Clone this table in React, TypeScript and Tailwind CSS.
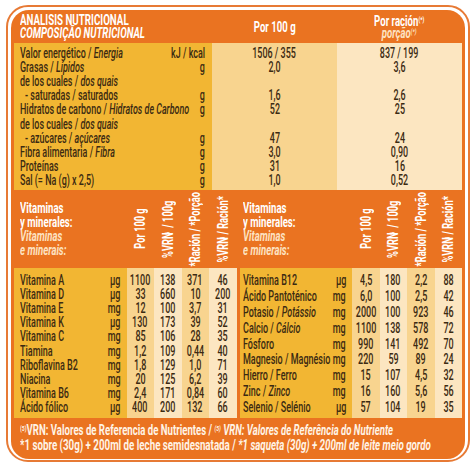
import React from "react";

// condensed look: Roboto squeezed horizontally, since no condensed face is installed
function T({ children, className = "" }: { children: React.ReactNode; className?: string }) {
    return <span className={`inline-block whitespace-nowrap ${className}`}>{children}</span>;
}

type TopRow = { es: string; pt?: string; unit?: string; a?: string; b?: string; indent?: boolean };

const topRows: TopRow[] = [
    { es: "Valor energético / ", pt: "Energia", unit: "kJ / kcal", a: "1506 / 355", b: "837 / 199" },
    { es: "Grasas / ", pt: "Lípidos", unit: "g", a: "2,0", b: "3,6" },
    { es: "de los cuales / ", pt: "dos quais" },
    { es: "- saturadas / saturados", unit: "g", a: "1,6", b: "2,6", indent: true },
    { es: "Hidratos de carbono / ", pt: "Hidratos de Carbono", unit: "g", a: "52", b: "25" },
    { es: "de los cuales / ", pt: "dos quais" },
    { es: "- azúcares / ", pt: "açúcares", unit: "g", a: "47", b: "24", indent: true },
    { es: "Fibra alimentaria / ", pt: "Fibra", unit: "g", a: "3,0", b: "0,90" },
    { es: "Proteínas", unit: "g", a: "31", b: "16" },
    { es: "Sal (= Na (g) x 2,5)", unit: "g", a: "1,0", b: "0,52" },
];

type VitRow = { es: string; pt?: string; unit: string; v: string[] };

const leftVits: VitRow[] = [
    { es: "Vitamina A", unit: "µg", v: ["1100", "138", "371", "46"] },
    { es: "Vitamina D", unit: "µg", v: ["33", "660", "10", "200"] },
    { es: "Vitamina E", unit: "mg", v: ["12", "100", "3,7", "31"] },
    { es: "Vitamina K", unit: "µg", v: ["130", "173", "39", "52"] },
    { es: "Vitamina C", unit: "mg", v: ["85", "106", "28", "35"] },
    { es: "Tiamina", unit: "mg", v: ["1,2", "109", "0,44", "40"] },
    { es: "Riboflavina B2", unit: "mg", v: ["1,8", "129", "1,0", "71"] },
    { es: "Niacina", unit: "mg", v: ["20", "125", "6,2", "39"] },
    { es: "Vitamina B6", unit: "mg", v: ["2,4", "171", "0,84", "60"] },
    { es: "Ácido fólico", unit: "µg", v: ["400", "200", "132", "66"] },
];

const rightVits: VitRow[] = [
    { es: "Vitamina B12", unit: "µg", v: ["4,5", "180", "2,2", "88"] },
    { es: "Ácido Pantoténico", unit: "mg", v: ["6,0", "100", "2,5", "42"] },
    { es: "Potasio / ", pt: "Potássio", unit: "mg", v: ["2000", "100", "923", "46"] },
    { es: "Calcio / ", pt: "Cálcio", unit: "mg", v: ["1100", "138", "578", "72"] },
    { es: "Fósforo", unit: "mg", v: ["990", "141", "492", "70"] },
    { es: "Magnesio / Magnésio", unit: "mg", v: ["220", "59", "89", "24"] },
    { es: "Hierro / Ferro", unit: "mg", v: ["15", "107", "4,5", "32"] },
    { es: "Zinc / ", pt: "Zinco", unit: "mg", v: ["16", "160", "5,6", "56"] },
    { es: "Selenio / Selénio", unit: "µg", v: ["57", "104", "19", "35"] },
];

function VitTable({ rows, pad }: { rows: VitRow[]; pad: string }) {
    const colBg = ["bg-[#f8d48f]", "bg-[#fce6c1]", "bg-[#f8d48f]", "bg-[#fce6c1]"];
    const heads = [
        <>Por 100 g</>,
        <>%VRN<sup className="text-[7px]">5</sup> / 100g</>,
        <>*Ración / *Porção</>,
        <>%VRN<sup className="text-[7px]">5</sup>/ Ración*</>,
    ];
    return (
        <div className="flex flex-col w-[222.5px]">
            <div className="flex h-[78px]">
                <div className={`w-[112.5px] ${pad} pt-[11px] text-[15px] leading-[14px] font-bold`}>
                    <p><T className="scale-x-[0.64] origin-left text-white">Vitaminas</T></p>
                    <p><T className="scale-x-[0.64] origin-left text-white">y minerales:</T></p>
                    <p><T className="scale-x-[0.64] origin-left italic text-[#fde3c3]">Vitaminas</T></p>
                    <p><T className="scale-x-[0.64] origin-left italic text-[#fde3c3]">e minerais:</T></p>
                </div>
                {heads.map((h, i) => (
                    <div key={i} className="w-[27.5px] flex items-center justify-center">
                        <span className="[writing-mode:vertical-rl] rotate-180 scale-y-[0.66] whitespace-nowrap text-[14px] font-bold text-white leading-none">
                            {h}
                        </span>
                    </div>
                ))}
            </div>
            <div className="flex h-[150px] text-[15px] leading-[13px] font-medium text-[#3b2a12]">
                <div className="w-[112.5px] bg-[#f2b633] pt-[5px] pb-[3px] flex flex-col">
                    {rows.map((r, i) => (
                        <div key={i} className={`flex-1 min-h-0 grid grid-cols-[minmax(0,1fr)_auto] items-center ${pad} pr-[6px]`}>
                            <div className="min-w-0">
                                <T className="scale-x-[0.6] origin-left">
                                    {r.es}
                                    {r.pt && <i>{r.pt}</i>}
                                </T>
                            </div>
                            <T className="scale-x-[0.6] origin-right">{r.unit}</T>
                        </div>
                    ))}
                </div>
                {colBg.map((bg, c) => (
                    <div key={c} className={`w-[27.5px] ${bg} pt-[5px] pb-[3px] flex flex-col`}>
                        {rows.map((r, i) => (
                            <div key={i} className="flex-1 min-h-0 flex items-center justify-center">
                                <T className="scale-x-[0.6] origin-center">{r.v[c]}</T>
                            </div>
                        ))}
                    </div>
                ))}
            </div>
        </div>
    );
}

export default function App() {
    return (
        <div className="w-[474px] h-[463px] bg-white pt-[5px] pl-[6px] font-['Roboto',sans-serif]">
            <div className="w-[464px] h-[457px] rounded-[22px] border-2 border-[#e77a35] pt-[3px] px-[3px] pb-[1px]">
                <div className="h-full rounded-[18px] bg-[#ea7321] px-[3px] overflow-hidden flex flex-col">
                    {/* title bar */}
                    <div className="flex h-[33px] shrink-0 font-bold">
                        <div className="w-[198px] pl-[6px] pt-[4px] text-[15px] leading-[13px] text-white">
                            <p><T className="scale-x-[0.65] origin-left">ANALISIS NUTRICIONAL</T></p>
                            <p><T className="scale-x-[0.65] origin-left italic">COMPOSIÇÃO NUTRICIONAL</T></p>
                        </div>
                        <div className="w-[125px] flex items-center justify-center text-[15px] leading-[14px] text-white">
                            <T className="scale-x-[0.64] origin-center">Por 100 g</T>
                        </div>
                        <div className="w-[125px] flex flex-col items-center justify-center text-[15px] leading-[12px]">
                            <T className="scale-x-[0.64] origin-center text-white">
                                Por ración<sup className="text-[8px]">(*)</sup>
                            </T>
                            <T className="scale-x-[0.64] origin-center italic text-[#fde3c3]">
                                porção<sup className="text-[8px]">(*)</sup>
                            </T>
                        </div>
                    </div>

                    {/* main values */}
                    <div className="flex h-[147px] shrink-0 text-[14px] leading-[13px] font-medium text-[#3b2a12]">
                        <div className="w-[198px] bg-[#f2b633] pt-[3px] pb-[2px] flex flex-col">
                            {topRows.map((r, i) => (
                                <div key={i} className="flex-1 min-h-0 grid grid-cols-[minmax(0,1fr)_auto] items-center pl-[6px] pr-[7px]">
                                    <div className={`min-w-0 ${r.indent ? "pl-[5px]" : ""}`}>
                                        <T className="scale-x-[0.64] origin-left">
                                            {r.es}
                                            {r.pt && <i>{r.pt}</i>}
                                        </T>
                                    </div>
                                    <T className="scale-x-[0.64] origin-right">{r.unit}</T>
                                </div>
                            ))}
                        </div>
                        <div className="w-[125px] bg-[#f8d48f] pt-[3px] pb-[2px] flex flex-col">
                            {topRows.map((r, i) => (
                                <div key={i} className="flex-1 min-h-0 flex items-center justify-center">
                                    <T className="scale-x-[0.64] origin-center">{r.a}</T>
                                </div>
                            ))}
                        </div>
                        <div className="w-[125px] bg-[#fce6c1] pt-[3px] pb-[2px] flex flex-col">
                            {topRows.map((r, i) => (
                                <div key={i} className="flex-1 min-h-0 flex items-center justify-center">
                                    <T className="scale-x-[0.64] origin-center">{r.b}</T>
                                </div>
                            ))}
                        </div>
                    </div>

                    {/* vitamins and minerals */}
                    <div className="flex gap-[3px] shrink-0">
                        <VitTable rows={leftVits} pad="pl-[6px]" />
                        <VitTable rows={rightVits} pad="pl-[3px]" />
                    </div>

                    {/* footer */}
                    <div className="flex-1 pl-[6px] pt-[5px] text-[15px] leading-[15px] font-bold text-[#fff4e6]">
                        <p>
                            <T className="scale-x-[0.64] origin-left">
                                <sup className="text-[8px]">(5)</sup>VRN: Valores de Referencia de Nutrientes /{" "}
                                <i>
                                    <sup className="text-[8px]">(5)</sup> VRN: Valores de Referência do Nutriente
                                </i>
                            </T>
                        </p>
                        <p>
                            <T className="scale-x-[0.65] origin-left">
                                *1 sobre (30g) + 200ml de leche semidesnatada /{" "}
                                <i>*1 saqueta (30g) + 200ml de leite meio gordo</i>
                            </T>
                        </p>
                    </div>
                </div>
            </div>
        </div>
    );
}
